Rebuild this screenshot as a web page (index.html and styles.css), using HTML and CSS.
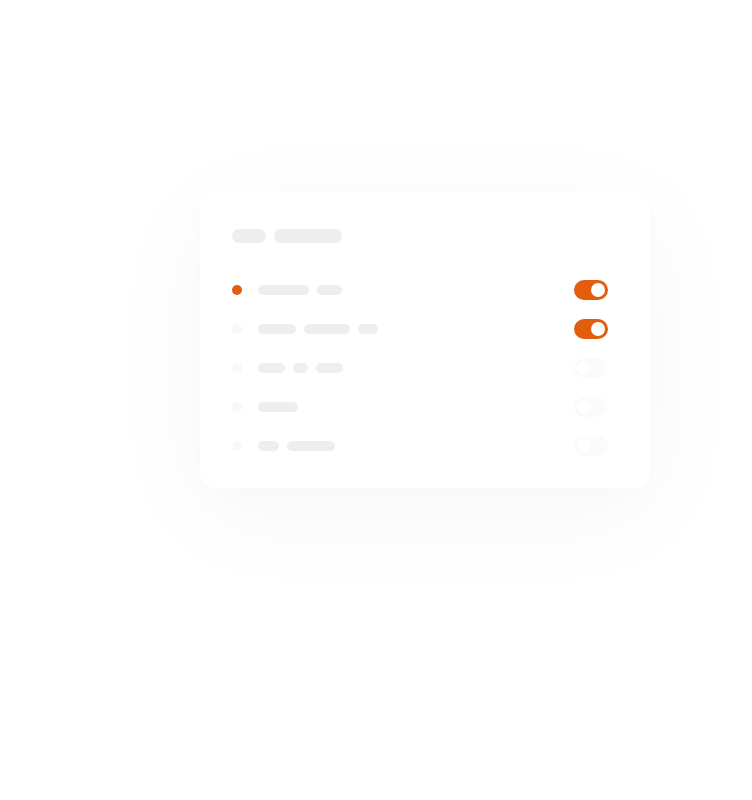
FILE: index.html
```html
<!DOCTYPE html>
<html>
<head>
<meta charset="utf-8">
<link rel="stylesheet" href="styles.css">
</head>
<body>
<div class="card">
  <div class="header">
    <span class="pill pill-lg" style="width:34px"></span>
    <span class="pill pill-lg" style="width:68px"></span>
  </div>
  <div class="list">
    <div class="row">
      <span class="dot dot-on"></span>
      <div class="pills">
        <span class="pill" style="width:51px"></span>
        <span class="pill" style="width:25px"></span>
      </div>
      <span class="toggle on"><span class="knob"></span></span>
    </div>
    <div class="row">
      <span class="dot"></span>
      <div class="pills">
        <span class="pill" style="width:38px"></span>
        <span class="pill" style="width:46px"></span>
        <span class="pill" style="width:20px"></span>
      </div>
      <span class="toggle on"><span class="knob"></span></span>
    </div>
    <div class="row">
      <span class="dot"></span>
      <div class="pills">
        <span class="pill" style="width:27px"></span>
        <span class="pill" style="width:15px"></span>
        <span class="pill" style="width:27px"></span>
      </div>
      <span class="toggle off"><span class="knob"></span></span>
    </div>
    <div class="row">
      <span class="dot"></span>
      <div class="pills">
        <span class="pill" style="width:40px"></span>
      </div>
      <span class="toggle off"><span class="knob"></span></span>
    </div>
    <div class="row">
      <span class="dot"></span>
      <div class="pills">
        <span class="pill" style="width:21px"></span>
        <span class="pill" style="width:48px"></span>
      </div>
      <span class="toggle off"><span class="knob"></span></span>
    </div>
  </div>
</div>
</body>
</html>
```
FILE: styles.css
```css
html, body {
  margin: 0;
  padding: 0;
  background: #ffffff;
  font-family: "Inter", "Liberation Sans", sans-serif;
}
body {
  padding-top: 191px;
  padding-left: 200px;
  height: 800px;
  box-sizing: border-box;
}
.card {
  width: 450px;
  box-sizing: border-box;
  background: #ffffff;
  border-radius: 16px;
  padding: 38px 42px 32px 32px;
  box-shadow: 0 24px 110px rgba(0, 0, 0, 0.04), 0 4px 24px rgba(0, 0, 0, 0.012);
}
.header {
  display: flex;
  gap: 8px;
  height: 14px;
}
.pill {
  display: block;
  height: 10px;
  border-radius: 5px;
  background: #eeeeee;
}
.pill-lg {
  height: 14px;
  border-radius: 7px;
}
.list {
  margin-top: 37px;
  display: flex;
  flex-direction: column;
  gap: 19px;
}
.row {
  display: flex;
  align-items: center;
  height: 20px;
}
.dot {
  width: 10px;
  height: 10px;
  border-radius: 50%;
  background: #f8f8f8;
  margin-right: 16px;
  flex: none;
}
.dot-on {
  background: #e35d0e;
}
.pills {
  display: flex;
  gap: 8px;
  flex: 1;
}
.toggle {
  width: 34px;
  height: 20px;
  border-radius: 10px;
  flex: none;
  position: relative;
  box-sizing: border-box;
}
.toggle.on {
  background: #e35d0e;
}
.toggle.off {
  background: #f9f9f9;
  opacity: 0.6;
}
.knob {
  position: absolute;
  top: 3px;
  width: 14px;
  height: 14px;
  border-radius: 50%;
  background: #ffffff;
}
.toggle.on .knob {
  right: 3px;
}
.toggle.off .knob {
  left: 3px;
  box-shadow: 0 0 2px rgba(0, 0, 0, 0.05);
}
```
